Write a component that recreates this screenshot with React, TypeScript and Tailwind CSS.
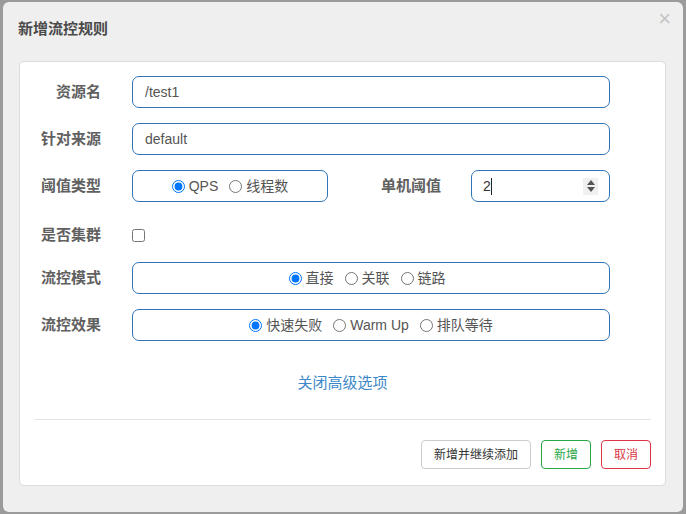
import React, { useState } from 'react';

const FONT = { fontFamily: '"Liberation Sans", "Noto Sans CJK SC", sans-serif' };

interface Option {
  value: string;
  label: string;
}

function RadioGroup({
  name,
  options,
  value,
  onChange,
  className,
}: {
  name: string;
  options: Option[];
  value: string;
  onChange: (v: string) => void;
  className?: string;
}) {
  return (
    <div
      className={`h-[32px] rounded-[7px] border border-[#2f74b5] flex items-center justify-center gap-[11px] pt-[1px] ${className || ''}`}
    >
      {options.map((opt) => (
        <label key={opt.value} className="flex items-center text-[14px] text-[#555] cursor-pointer">
          <input
            type="radio"
            name={name}
            checked={value === opt.value}
            onChange={() => onChange(opt.value)}
            className="m-0 mr-[4px] w-[13px] h-[13px]"
          />
          {opt.label}
        </label>
      ))}
    </div>
  );
}

function Label({ children, className }: { children: React.ReactNode; className?: string }) {
  return (
    <div className={`text-right text-[15px] font-bold text-[#606060] leading-[20px] ${className || 'w-[81px]'}`}>
      {children}
    </div>
  );
}

export default function App() {
  const [resource, setResource] = useState('/test1');
  const [limitApp, setLimitApp] = useState('default');
  const [grade, setGrade] = useState('qps');
  const [count, setCount] = useState('2');
  const [clusterMode, setClusterMode] = useState(false);
  const [strategy, setStrategy] = useState('direct');
  const [behavior, setBehavior] = useState('fast');

  return (
    <div className="w-[686px] h-[514px] bg-[#9b9b9b] pt-[2px] pl-[3px] overflow-hidden" style={FONT}>
      <div className="w-[680px] h-[510px] bg-[#efefef] rounded-[6px] flex flex-col">
        {/* header */}
        <div className="h-[59px] flex items-start justify-between pl-[15px] pr-[12px]">
          <h3 className="mt-[17px] text-[15px] font-bold text-[#4a4a4a] leading-[20px]">新增流控规则</h3>
          <button className="mt-[7px] text-[22px] leading-[20px] text-[#c4c4c4] font-light">×</button>
        </div>

        {/* body panel */}
        <div className="ml-[16px] w-[647px] h-[425px] bg-white border border-[#dcdcdc] rounded-[5px] flex flex-col">
          <div className="pt-[14px] flex flex-col">
            <div className="flex items-center h-[32px]">
              <Label>资源名</Label>
              <input
                value={resource}
                onChange={(e) => setResource(e.target.value)}
                className="ml-[31px] w-[478px] h-[32px] rounded-[7px] border border-[#2f74b5] px-[12px] text-[14px] text-[#555] outline-none"
              />
            </div>

            <div className="flex items-center h-[32px] mt-[15px]">
              <Label>针对来源</Label>
              <input
                value={limitApp}
                onChange={(e) => setLimitApp(e.target.value)}
                className="ml-[31px] w-[478px] h-[32px] rounded-[7px] border border-[#2f74b5] px-[12px] text-[14px] text-[#555] outline-none"
              />
            </div>

            <div className="flex items-center h-[32px] mt-[15px]">
              <Label>阈值类型</Label>
              <RadioGroup
                name="grade"
                className="ml-[31px] w-[196px]"
                value={grade}
                onChange={setGrade}
                options={[
                  { value: 'qps', label: 'QPS' },
                  { value: 'thread', label: '线程数' },
                ]}
              />
              <Label className="w-[113px]">单机阈值</Label>
              <div className="ml-[30px] w-[139px] h-[32px] rounded-[7px] border border-[#2f74b5] flex items-center pl-[11px] pr-[11px]">
                <input
                  value={count}
                  onChange={(e) => setCount(e.target.value)}
                  className="w-[8px] text-[14px] text-[#333] outline-none bg-transparent"
                />
                <span className="w-[1px] h-[17px] bg-[#222]" />
                <div className="ml-auto w-[15px] h-[17px] bg-[#f0f0f0] flex flex-col items-center justify-center gap-[2px]">
                  <svg width="8" height="5" viewBox="0 0 8 5">
                    <path d="M0 5 L4 0 L8 5 Z" fill="#555" />
                  </svg>
                  <svg width="8" height="5" viewBox="0 0 8 5">
                    <path d="M0 0 L8 0 L4 5 Z" fill="#555" />
                  </svg>
                </div>
              </div>
            </div>

            <div className="flex items-center h-[30px] mt-[18px] mb-[12px]">
              <Label>是否集群</Label>
              <input
                type="checkbox"
                checked={clusterMode}
                onChange={(e) => setClusterMode(e.target.checked)}
                className="ml-[31px] m-0 w-[13px] h-[13px]"
              />
            </div>

            <div className="flex items-center h-[32px]">
              <Label>流控模式</Label>
              <RadioGroup
                name="strategy"
                className="ml-[31px] w-[478px] pr-[8px]"
                value={strategy}
                onChange={setStrategy}
                options={[
                  { value: 'direct', label: '直接' },
                  { value: 'relate', label: '关联' },
                  { value: 'chain', label: '链路' },
                ]}
              />
            </div>

            <div className="flex items-center h-[32px] mt-[15px]">
              <Label>流控效果</Label>
              <RadioGroup
                name="behavior"
                className="ml-[31px] w-[478px]"
                value={behavior}
                onChange={setBehavior}
                options={[
                  { value: 'fast', label: '快速失败' },
                  { value: 'warm', label: 'Warm Up' },
                  { value: 'queue', label: '排队等待' },
                ]}
              />
            </div>
          </div>

          <div className="mt-[32px] flex justify-center">
            <a href="#" className="text-[15px] leading-[20px] text-[#3d87c9]">
              关闭高级选项
            </a>
          </div>

          <div className="mx-[14px] mt-[26px] border-t border-[#e5e5e5]" />

          <div className="mt-[20px] mr-[14px] flex justify-end gap-[10px]">
            <button className="w-[110px] h-[29px] rounded-[4px] border border-[#cccccc] bg-white text-[12px] text-[#333]">
              新增并继续添加
            </button>
            <button className="w-[50px] h-[29px] rounded-[4px] border border-[#28a745] bg-white text-[12px] text-[#28a745]">
              新增
            </button>
            <button className="w-[50px] h-[29px] rounded-[4px] border border-[#dc3545] bg-white text-[12px] text-[#dc3545]">
              取消
            </button>
          </div>
        </div>
      </div>
    </div>
  );
}
